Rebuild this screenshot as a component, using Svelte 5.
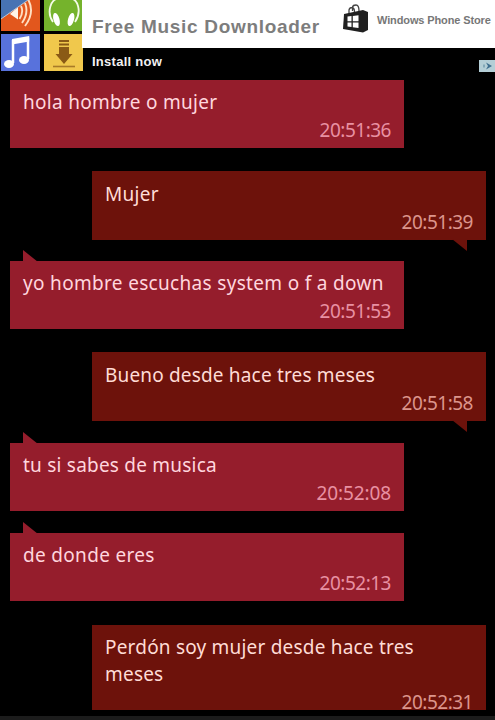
<script lang="ts">
    type Message = {
        lines: string[];
        time: string;
        spacing: number; // letter spacing of the text (px)
        timeSpacing: number; // letter spacing of the time (px)
        own?: boolean;
        tail?: boolean;
        cut?: boolean;
    };

    const messages: Message[] = [
        { lines: ['hola hombre o mujer'], time: '20:51:36', spacing: 0.28, timeSpacing: -0.5 },
        { lines: ['Mujer'], time: '20:51:39', spacing: 0.28, timeSpacing: -0.5, own: true, tail: true },
        { lines: ['yo hombre escuchas system o f a down'], time: '20:51:53', spacing: 0.32, timeSpacing: -0.5, tail: true },
        { lines: ['Bueno desde hace tres meses'], time: '20:51:58', spacing: 0.17, timeSpacing: -0.5, own: true, tail: true },
        { lines: ['tu si sabes de musica'], time: '20:52:08', spacing: 0.22, timeSpacing: -0.1, tail: true },
        { lines: ['de donde eres'], time: '20:52:13', spacing: 0.32, timeSpacing: -0.5, tail: true },
        { lines: ['Perdón soy mujer desde hace tres', 'meses'], time: '20:52:31', spacing: 0.2, timeSpacing: -0.5, own: true, cut: true }
    ];
</script>

<div class="screen">
    <header class="ad">
        <div class="tiles">
            <svg class="tile orange" viewBox="0 0 39 31">
                <path d="M9 14L17 7V19.500Z" fill="#fff4e8" />
                <path d="M20 6Q23 12 18.500 19M24 3Q28 13 21 23M27.500 0Q34 13 24 26" fill="none" stroke="#ffdfc2" stroke-width="1.900" />
                <path d="M0 0H27L0 19Z" fill="#4773b3" />
                <path d="M27 0L0 19" stroke="#b9c7d8" stroke-width="1" />
            </svg>
            <svg class="tile green" viewBox="0 0 39 31">
                <path d="M9 22C2 12 7 -1.500 15 -1.500H26C34 -1.500 38 12 31 22" fill="none" stroke="#f4fbe8" stroke-width="1.800" />
                <ellipse cx="12.500" cy="19.500" rx="3" ry="6.800" transform="rotate(-16 12.500 19.500)" fill="#fff" />
                <ellipse cx="27" cy="19.500" rx="3" ry="6.800" transform="rotate(16 27 19.500)" fill="#fff" />
            </svg>
            <svg class="tile blue" viewBox="0 0 39 37">
                <path d="M12 29V7L27 5V25" fill="none" stroke="#fff" stroke-width="2.500" />
                <path d="M11 5L28.200 2V7.500L11 10.500Z" fill="#fff" />
                <ellipse cx="8" cy="30" rx="5" ry="4" fill="#fff" />
                <ellipse cx="23" cy="26" rx="5" ry="4" fill="#fff" />
            </svg>
            <svg class="tile yellow" viewBox="0 0 39 37">
                <path d="M15 6H25V8H15ZM15 9.500H25V11.500H15ZM15 13H25V20H28.500L20 30L11.500 20H15Z" fill="#8a5a16" />
                <path d="M9 32.500H31" stroke="#a87b28" stroke-width="1.600" />
            </svg>
        </div>
        <div class="banner">
            <div class="top">
                <span class="title">Free Music Downloader</span>
                <svg class="bag" width="27" height="30" viewBox="0 0 27 30">
                    <path d="M7 10V6Q7.500 3.500 10 3.500Q12.500 4 12.500 8M10.500 7V3Q11 1 14 1Q17 1 17 7" fill="none" stroke="#444" stroke-width="1.300" />
                    <path d="M2 10L21 6L26 8V26L21 28.500L1 25Z" fill="#202020" />
                    <path d="M5.500 12.500L9.500 12V17.200H5.500ZM10.800 11.900L16.500 11.300V17.200H10.800ZM5.500 18.500H9.500V23L5.500 22.500ZM10.800 18.500H16.500V24L10.800 23.200Z" fill="#fff" />
                </svg>
                <span class="store">Windows Phone Store</span>
            </div>
            <div class="bottom">
                <span class="install">Install now</span>
                <svg class="choices" width="16" height="12" viewBox="0 0 16 12">
                    <rect width="16" height="12" fill="#b4ced6" />
                    <path d="M7 2.500L13 6L7 9.500L9 6Z" fill="#3f6f8f" />
                    <path d="M4 4.500H6V7.500H4Z" fill="#84a9b8" />
                </svg>
            </div>
        </div>
    </header>

    <main class="chat">
        {#each messages as message}
            <div class="bubble" class:own={message.own} class:tail={message.tail} class:cut={message.cut}>
                {#each message.lines as line}
                    <p style="letter-spacing: {message.spacing}px">{line}</p>
                {/each}
                <time style="letter-spacing: {message.timeSpacing}px">{message.time}</time>
            </div>
        {/each}
    </main>
    <footer></footer>
</div>

<style>
    :global(body) {
        background: #000;
    }

    .screen {
        display: flex;
        flex-direction: column;
        width: 495px;
        height: 720px;
        overflow: hidden;
        background: #000;
        font-family: "Noto Sans", "Open Sans", sans-serif;
    }

    .ad {
        display: flex;
        height: 80px;
        flex: none;
        font-family: "Liberation Sans", Arial, sans-serif;
        font-weight: bold;
    }

    .tiles {
        display: grid;
        grid-template: 31px 37px / 39px 39px;
        gap: 3px 4px;
        width: 82px;
        padding-left: 1px;
        box-sizing: border-box;
    }

    .tile {
        display: block;
        width: 100%;
        height: 100%;
    }

    .orange { background: #e2571d; }
    .green { background: #75b32c; }
    .blue { background: #5872dc; }
    .yellow { background: #f0c84c; }

    .banner {
        flex: 1;
    }

    .top {
        display: flex;
        height: 48px;
        background: #fff;
        white-space: nowrap;
    }

    .title {
        width: 250px;
        padding: 16px 0 0 10px;
        font-size: 19px;
        line-height: 22px;
        letter-spacing: 0.7px;
        color: #7d7d7d;
        box-sizing: border-box;
    }

    .bag {
        margin: 4px 0 0 10px;
    }

    .store {
        padding: 13px 0 0 8px;
        font-size: 11px;
        line-height: 14px;
        letter-spacing: -0.12px;
        color: #777;
    }

    .bottom {
        display: flex;
        justify-content: space-between;
        height: 32px;
    }

    .install {
        padding: 6px 0 0 10px;
        font-size: 13px;
        line-height: 16px;
        letter-spacing: 0.26px;
        color: #f2f2f2;
    }

    .choices {
        margin-top: 12px;
    }

    .chat {
        display: flex;
        flex-direction: column;
        height: 636px;
        flex: none;
    }

    .bubble {
        position: relative;
        width: 394px;
        height: 68px;
        margin: 0 0 23px 10px;
        padding: 9px 13px 0;
        box-sizing: border-box;
        flex: none;
        background: #951d2c;
        color: #ffd6de;
    }

    .bubble.own {
        height: 69px;
        margin: 0 0 21px 92px;
        padding-top: 10px;
        background: #6d120b;
        color: #ffdcd6;
    }

    .bubble:nth-child(4),
    .bubble:nth-child(5) {
        margin-bottom: 22px;
    }

    .bubble:nth-child(6) {
        margin-bottom: 24px;
    }

    .bubble.cut {
        height: 85px;
        padding-top: 9px;
        overflow: hidden;
    }

    .tail::before {
        content: '';
        position: absolute;
        top: -11px;
        left: 13px;
        width: 15px;
        height: 12px;
        background: #951d2c;
        clip-path: polygon(0 0, 100% 100%, 0 100%);
    }

    .own.tail::before {
        top: 68px;
        left: 360px;
        background: #6d120b;
        clip-path: polygon(0 0, 100% 0, 100% 100%);
    }

    p {
        margin: 0;
        font-size: 19px;
        line-height: 27px;
        white-space: nowrap;
    }

    time {
        display: block;
        text-align: right;
        font-size: 19px;
        line-height: 28px;
        color: #e890a2;
    }

    .own time {
        color: #dc958c;
    }

    footer {
        height: 4px;
        background: #1c1c1c;
    }
</style>
